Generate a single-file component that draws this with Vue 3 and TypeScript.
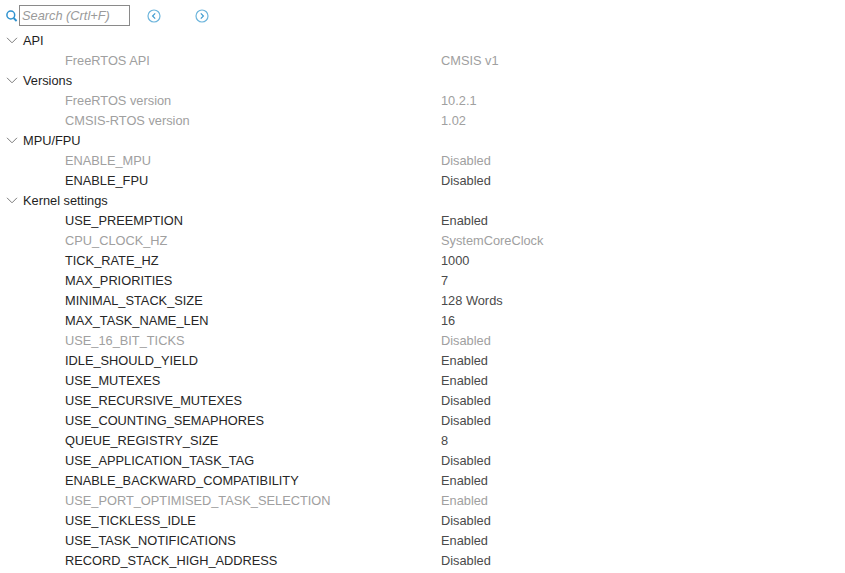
<script setup lang="ts">
interface Row {
  name: string;
  value: string;
  off?: boolean;
}
interface Group {
  title: string;
  rows: Row[];
}

const groups: Group[] = [
  { title: 'API', rows: [{ name: 'FreeRTOS API', value: 'CMSIS v1', off: true }] },
  {
    title: 'Versions',
    rows: [
      { name: 'FreeRTOS version', value: '10.2.1', off: true },
      { name: 'CMSIS-RTOS version', value: '1.02', off: true },
    ],
  },
  {
    title: 'MPU/FPU',
    rows: [
      { name: 'ENABLE_MPU', value: 'Disabled', off: true },
      { name: 'ENABLE_FPU', value: 'Disabled' },
    ],
  },
  {
    title: 'Kernel settings',
    rows: [
      { name: 'USE_PREEMPTION', value: 'Enabled' },
      { name: 'CPU_CLOCK_HZ', value: 'SystemCoreClock', off: true },
      { name: 'TICK_RATE_HZ', value: '1000' },
      { name: 'MAX_PRIORITIES', value: '7' },
      { name: 'MINIMAL_STACK_SIZE', value: '128 Words' },
      { name: 'MAX_TASK_NAME_LEN', value: '16' },
      { name: 'USE_16_BIT_TICKS', value: 'Disabled', off: true },
      { name: 'IDLE_SHOULD_YIELD', value: 'Enabled' },
      { name: 'USE_MUTEXES', value: 'Enabled' },
      { name: 'USE_RECURSIVE_MUTEXES', value: 'Disabled' },
      { name: 'USE_COUNTING_SEMAPHORES', value: 'Disabled' },
      { name: 'QUEUE_REGISTRY_SIZE', value: '8' },
      { name: 'USE_APPLICATION_TASK_TAG', value: 'Disabled' },
      { name: 'ENABLE_BACKWARD_COMPATIBILITY', value: 'Enabled' },
      { name: 'USE_PORT_OPTIMISED_TASK_SELECTION', value: 'Enabled', off: true },
      { name: 'USE_TICKLESS_IDLE', value: 'Disabled' },
      { name: 'USE_TASK_NOTIFICATIONS', value: 'Enabled' },
      { name: 'RECORD_STACK_HIGH_ADDRESS', value: 'Disabled' },
    ],
  },
];
</script>

<template>
  <div class="panel">
    <div class="toolbar">
      <svg class="search-icon" width="14" height="14" viewBox="0 0 14 14">
        <circle cx="5.8" cy="6" r="3.9" fill="none" stroke="#2f93d0" stroke-width="1.5" />
        <path d="M8.6 9l3 3" stroke="#2f93d0" stroke-width="1.8" fill="none" />
      </svg>
      <div class="search">Search (Crtl+F)</div>
      <svg class="nav nav-prev" width="14" height="14" viewBox="0 0 14 14">
        <circle cx="7" cy="7" r="6" fill="none" stroke="#6db5dc" stroke-width="1.2" />
        <path d="M8.2 4.4L5.6 7l2.6 2.6" fill="none" stroke="#3f9bcf" stroke-width="1.2" />
      </svg>
      <svg class="nav nav-next" width="14" height="14" viewBox="0 0 14 14">
        <circle cx="7" cy="7" r="6" fill="none" stroke="#6db5dc" stroke-width="1.2" />
        <path d="M5.8 4.4L8.4 7l-2.6 2.6" fill="none" stroke="#3f9bcf" stroke-width="1.2" />
      </svg>
    </div>
    <template v-for="group in groups" :key="group.title">
      <div class="group-row">
        <svg class="chevron" width="12" height="7" viewBox="0 0 12 7">
          <path d="M1 .8l5 5 5-5" fill="none" stroke="#7a7a7a" stroke-width="1" />
        </svg>
        <span>{{ group.title }}</span>
      </div>
      <div v-for="row in group.rows" :key="row.name" class="row" :class="{ off: row.off }">
        <span class="name">{{ row.name }}</span>
        <span class="value">{{ row.value }}</span>
      </div>
    </template>
  </div>
</template>

<style scoped>
.panel {
  width: 845px;
  height: 573px;
  overflow: hidden;
  background: #fff;
  font-family: "Liberation Sans", Arial, sans-serif;
  font-size: 12.8px;
  line-height: 20px;
  color: #1e1e1e;
  box-sizing: border-box;
  padding-top: 5px;
}
.toolbar {
  display: flex;
  align-items: center;
  height: 21px;
  margin-bottom: 4px;
}
.search-icon {
  margin-left: 5px;
}
.search {
  box-sizing: border-box;
  width: 111px;
  height: 21px;
  line-height: 20px;
  border: 1px solid #8a8a8a;
  padding-left: 2px;
  color: #9a9a9a;
  font-style: italic;
}
.nav-prev {
  margin-left: 17px;
}
.nav-next {
  margin-left: 34px;
}
.group-row {
  display: flex;
  align-items: center;
  height: 20px;
  padding-left: 6px;
}
.group-row span,
.row span {
  padding-top: 1px;
}
.chevron {
  margin-right: 5px;
}
.row {
  display: flex;
  align-items: center;
  height: 20px;
  padding-left: 65px;
}
.name {
  width: 376px;
  flex: none;
  color: #262626;
}
.value {
  color: #4a4a4a;
}
.row.off .name,
.row.off .value {
  color: #a0a0a0;
}
</style>
